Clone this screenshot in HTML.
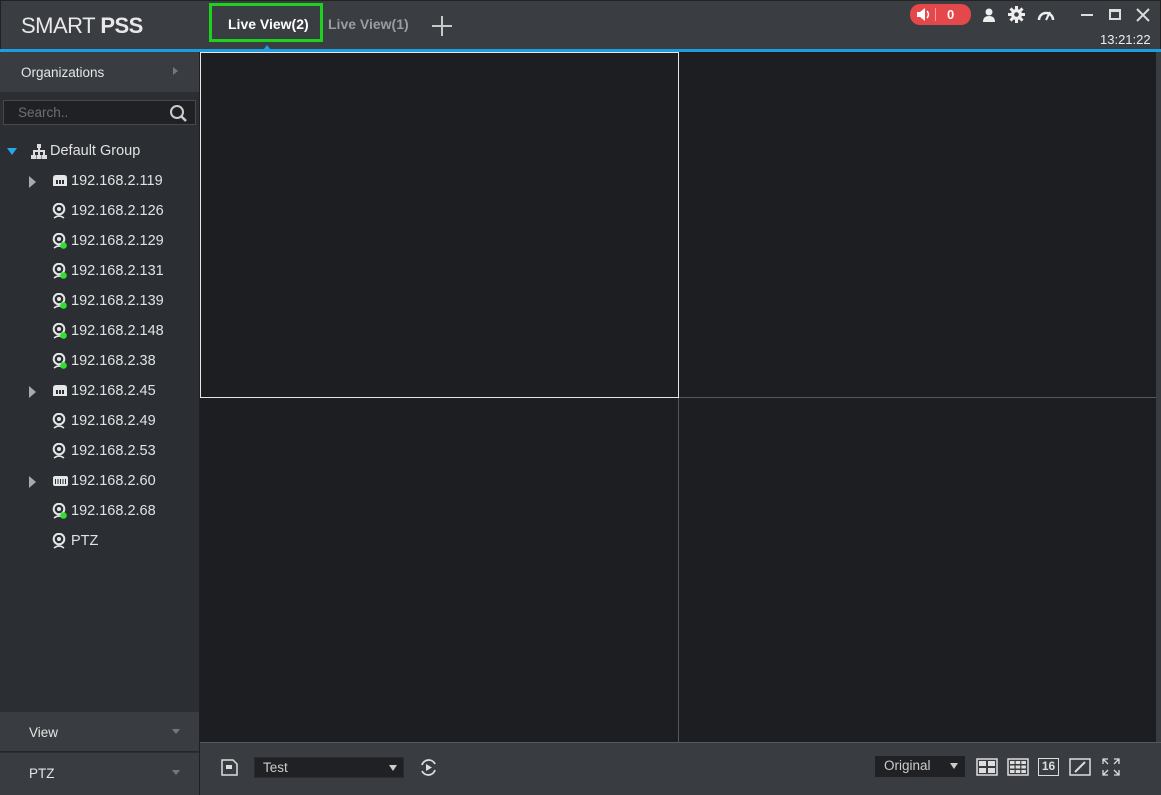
<!DOCTYPE html>
<html><head><meta charset="utf-8"><style>
*{margin:0;padding:0;box-sizing:border-box}
body{width:1161px;height:795px;background:#2b2e33;font-family:"Liberation Sans",Arial,sans-serif;position:relative;overflow:hidden;color:#e6e6e6}
.a{position:absolute}
#hdr{left:0;top:0;width:1161px;height:50px;background:#3a3d42;border:1px solid #222;border-bottom:none}
#blue{left:0;top:49px;width:1161px;height:3px;background:#1d9ee0}
.logo{left:21px;top:13px;font-size:22px;color:#e8e8e8;letter-spacing:-0.5px}
.tab{font-size:14px;font-weight:bold}
#side{left:0;top:52px;width:200px;height:743px;background:#2b2e33;border-right:1px solid #1e2024}
.row{position:absolute;left:0;width:199px;font-size:14px}
.tree{font-size:14.5px;color:#e2e2e2;position:absolute}
#vid{left:200px;top:52px;width:956px;height:690px;background:#1c1e22}
#bot{left:200px;top:742px;width:961px;height:53px;background:#393c41;border-top:1px solid #55585d}
</style></head><body>
<div id="hdr" class="a"></div>
<div class="a logo">SMART <b>PSS</b></div>
<div class="a" style="left:209px;top:3px;width:114px;height:39px;border:3px solid #1ed11e"></div>
<div class="a tab" style="left:228px;top:16px;color:#fff">Live View(2)</div>
<div class="a tab" style="left:328px;top:16px;color:#9a9ca0">Live View(1)</div>
<div class="a" style="left:432px;top:25px;width:20px;height:2px;background:#c8c8c8"></div>
<div class="a" style="left:441px;top:16px;width:2px;height:20px;background:#c8c8c8"></div>
<div class="a" style="left:910px;top:4px;width:61px;height:21px;background:#e5484a;border-radius:10px"></div>
<svg class="a" style="left:915px;top:7px" width="20" height="15"><path d="M2 5h3l5-4v13l-5-4H2z" fill="#fff"/><path d="M12 4q3 3.5 0 7" stroke="#fff" fill="none" stroke-width="1.5"/></svg>
<div class="a" style="left:935px;top:8px;width:1px;height:13px;background:#fff;opacity:.5"></div>
<div class="a" style="left:947px;top:7px;font-size:13px;font-weight:bold;color:#fff">0</div>
<svg class="a" style="left:982px;top:7px" width="14" height="16"><circle cx="7" cy="5" r="3.5" fill="#eee"/><path d="M1 15q0-6 6-6t6 6z" fill="#eee"/></svg>
<svg class="a" style="left:1008px;top:6px" width="17" height="17"><g fill="#eee"><circle cx="8.5" cy="8.5" r="5.5"/><rect x="7" y="0" width="3" height="17"/><rect x="0" y="7" width="17" height="3"/><rect x="7" y="0" width="3" height="17" transform="rotate(45 8.5 8.5)"/><rect x="7" y="0" width="3" height="17" transform="rotate(-45 8.5 8.5)"/></g><circle cx="8.5" cy="8.5" r="2.3" fill="#3a3d42"/></svg>
<svg class="a" style="left:1037px;top:8px" width="18" height="14"><path d="M2 12A7 7 0 1 1 16 12" stroke="#eee" stroke-width="2.5" fill="none"/><path d="M9 12L13 4" stroke="#eee" stroke-width="2"/></svg>
<div class="a" style="left:1081px;top:14px;width:12px;height:2px;background:#ddd"></div>
<div class="a" style="left:1109px;top:9px;width:12px;height:11px;border:2px solid #ddd;border-top-width:3px"></div>
<svg class="a" style="left:1136px;top:8px" width="14" height="14"><path d="M1 1L13 13M13 1L1 13" stroke="#ddd" stroke-width="2"/></svg>
<div class="a" style="left:1100px;top:32px;font-size:13px;color:#eee">13:21:22</div>
<div id="blue" class="a"></div>
<div class="a" style="left:263px;top:45px;width:0;height:0;border-left:4px solid transparent;border-right:4px solid transparent;border-bottom:5px solid #1d9ee0"></div>

<div id="side" class="a">
<div class="row" style="top:0;height:40px;background:#393c40;"><span style="position:absolute;left:21px;top:13px;font-size:13.5px">Organizations</span><span style="position:absolute;left:173px;top:15px;border-left:5px solid #777;border-top:4px solid transparent;border-bottom:4px solid transparent"></span></div>
<div class="a" style="left:3px;top:48px;width:193px;height:25px;background:#1f2125;border:1px solid #45484d"><span style="position:absolute;left:14px;top:4px;font-size:13.5px;color:#6c6f73">Search..</span>
<svg style="position:absolute;left:165px;top:3px" width="18" height="18"><circle cx="8" cy="8" r="6" stroke="#ccc" stroke-width="2" fill="none"/><path d="M12 12l5 5" stroke="#ccc" stroke-width="2.5"/></svg></div>
<div class="a" style="left:7px;top:96px;border-top:7px solid #29a8e8;border-left:5px solid transparent;border-right:5px solid transparent"></div>
<svg class="a" style="left:31px;top:92px" width="16" height="15"><g fill="#ddd"><rect x="6" y="0" width="4" height="4"/><rect x="7" y="4" width="2" height="3"/><rect x="2" y="6" width="12" height="2"/><rect x="2" y="8" width="2" height="3"/><rect x="12" y="8" width="2" height="3"/><rect x="7" y="8" width="2" height="3"/><rect x="0" y="11" width="5" height="4"/><rect x="11" y="11" width="5" height="4"/><rect x="5.5" y="11" width="5" height="4"/></g></svg>
<div class="tree" style="left:50px;top:91px">Default Group</div>
</div>
<div id="vid" class="a">
<div class="a" style="left:478px;top:346px;width:1px;height:344px;background:#55585c"></div>
<div class="a" style="left:478px;top:345px;width:478px;height:1px;background:#55585c"></div>
<div class="a" style="left:0;top:0;width:479px;height:346px;border:1px solid #e6e6e6"></div>
</div>
<div class="a" style="left:1156px;top:52px;width:5px;height:690px;background:#393c41"></div>
<div class="a" style="left:0;top:712px;width:199px;height:40px;background:#393c40;border-bottom:1px solid #25272b"><span style="position:absolute;left:29px;top:13px;font-size:13.5px">View</span><span style="position:absolute;left:172px;top:17px;border-top:5px solid #777;border-left:4px solid transparent;border-right:4px solid transparent"></span></div>
<div class="a" style="left:0;top:753px;width:199px;height:42px;background:#393c40"><span style="position:absolute;left:29px;top:13px;font-size:13.5px">PTZ</span><span style="position:absolute;left:172px;top:17px;border-top:5px solid #777;border-left:4px solid transparent;border-right:4px solid transparent"></span></div>

<div id="bot" class="a"></div>
<svg class="a" style="left:221px;top:759px" width="17" height="17"><path d="M1 1h11l4 4v11H1z" stroke="#ddd" stroke-width="1.5" fill="none"/><rect x="5" y="6" width="6" height="4" fill="#ddd"/></svg>
<div class="a" style="left:254px;top:757px;width:150px;height:21px;background:#1f2125;border:1px solid #2a2c30"><span style="position:absolute;left:8px;top:2px;font-size:13.5px;color:#ccc">Test</span><span style="position:absolute;left:134px;top:7px;border-top:6px solid #ccc;border-left:4px solid transparent;border-right:4px solid transparent"></span></div>
<svg class="a" style="left:419px;top:758px" width="19" height="19"><path d="M3 7A7 7 0 0 1 16 6M16 12A7 7 0 0 1 3 13" stroke="#ddd" stroke-width="1.8" fill="none"/><path d="M7 6l6 3.5-6 3.5z" fill="#ddd"/></svg>
<div class="a" style="left:875px;top:756px;width:90px;height:21px;background:#1f2125"><span style="position:absolute;left:9px;top:2px;font-size:13.5px;color:#ccc">Original</span><span style="position:absolute;left:75px;top:7px;border-top:6px solid #ccc;border-left:4px solid transparent;border-right:4px solid transparent"></span></div>
<svg class="a" style="left:976px;top:758px" width="22" height="18"><rect x="1" y="1" width="20" height="16" fill="none" stroke="#ddd" stroke-width="1.5"/><rect x="3" y="3" width="7" height="5" fill="#ddd"/><rect x="12" y="3" width="7" height="5" fill="#ddd"/><rect x="3" y="10" width="7" height="5" fill="#ddd"/><rect x="12" y="10" width="7" height="5" fill="#ddd"/></svg>
<svg class="a" style="left:1007px;top:758px" width="22" height="18"><rect x="1" y="1" width="20" height="16" fill="none" stroke="#ddd" stroke-width="1.5"/><g fill="#ddd"><rect x="3" y="3" width="4.5" height="3"/><rect x="8.7" y="3" width="4.5" height="3"/><rect x="14.4" y="3" width="4.5" height="3"/><rect x="3" y="7.5" width="4.5" height="3"/><rect x="8.7" y="7.5" width="4.5" height="3"/><rect x="14.4" y="7.5" width="4.5" height="3"/><rect x="3" y="12" width="4.5" height="3"/><rect x="8.7" y="12" width="4.5" height="3"/><rect x="14.4" y="12" width="4.5" height="3"/></g></svg>
<div class="a" style="left:1038px;top:758px;width:21px;height:18px;border:1.5px solid #ddd;font-size:12px;font-weight:bold;color:#ddd;text-align:center;line-height:15px">16</div>
<svg class="a" style="left:1069px;top:758px" width="22" height="18"><rect x="1" y="1" width="20" height="16" fill="none" stroke="#ddd" stroke-width="1.5"/><path d="M6 14L16 4" stroke="#ddd" stroke-width="2"/></svg>
<svg class="a" style="left:1102px;top:758px" width="18" height="18"><path d="M1 6V1h5M1 1l5 5M12 1h5v5M17 1l-5 5M1 12v5h5M1 17l5-5M17 12v5h-5M17 17l-5-5" stroke="#ddd" stroke-width="1.3" fill="none"/></svg>

<svg width="0" height="0" style="position:absolute"><defs>
<g id="cam"><circle cx="7" cy="6" r="5.3" fill="none" stroke="#e6e6e6" stroke-width="2"/><circle cx="7" cy="6" r="2" fill="#e6e6e6"/><path d="M2 15q5-4 10 0" stroke="#e6e6e6" stroke-width="1.5" fill="none"/></g>
<g id="nvr"><path d="M1 13V5q0-3 3-3h8q3 0 3 3v8z" fill="#e6e6e6"/><rect x="4" y="7" width="8" height="4" fill="#2b2e33"/><rect x="6" y="7" width="1" height="4" fill="#e6e6e6"/><rect x="9" y="7" width="1" height="4" fill="#e6e6e6"/></g>
<g id="nvr2"><rect x="1" y="3" width="15" height="10" rx="2" fill="#e6e6e6"/><g fill="#2b2e33"><rect x="3" y="6" width="1" height="5"/><rect x="5.5" y="6" width="1" height="5"/><rect x="8" y="6" width="1" height="5"/><rect x="10.5" y="6" width="1" height="5"/><rect x="13" y="6" width="1" height="5"/></g></g>
</defs></svg>
<div id="tree"></div>
<script>
var items=[["119","n",0],["126","c",0],["129","c",1],["131","c",1],["139","c",1],["148","c",1],["38","c",1],["45","n",0],["49","c",0],["53","c",0],["60","n2",0],["68","c",1],["PTZ","c",0]];
var h="";
items.forEach(function(it,i){var y=173+i*30;var t=it[0]=="PTZ"?"PTZ":"192.168.2."+it[0];
if(it[1]!="c")h+='<div class="a" style="left:29px;top:'+(y+3)+'px;border-left:7px solid #aaa;border-top:6px solid transparent;border-bottom:6px solid transparent"></div>';
var id=it[1]=="c"?"cam":(it[1]=="n"?"nvr":"nvr2");
h+='<svg class="a" style="left:52px;top:'+(y)+'px" width="18" height="18"><use href="#'+id+'"/>'+(it[2]?'<circle cx="11.5" cy="12.5" r="3.3" fill="#2fe02f"/>':'')+'</svg>';
h+='<div class="tree" style="left:71px;top:'+(y)+'px">'+t+'</div>';});
document.getElementById("tree").innerHTML=h;
</script>
</body></html>
